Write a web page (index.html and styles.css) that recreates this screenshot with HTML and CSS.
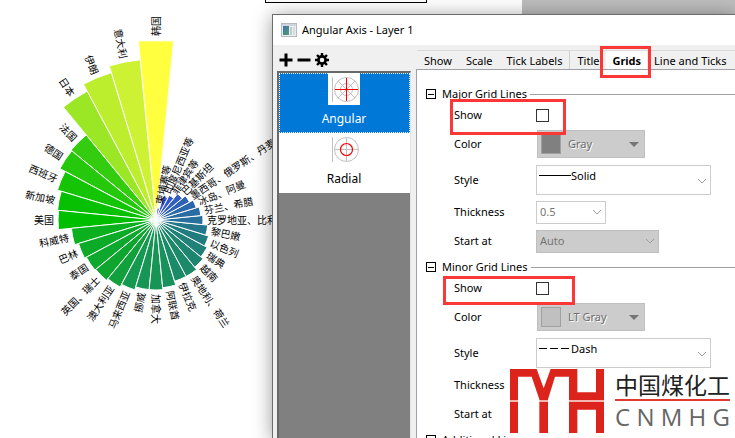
FILE: index.html
```html
<!DOCTYPE html>
<html lang="en">
<head>
<meta charset="utf-8">
<title>Angular Axis - Layer 1</title>
<link rel="stylesheet" href="styles.css">
</head>
<body>
<main class="desktop">
  <div class="page-frame"></div>
  <div class="workspace"></div>
  <svg class="chart" id="chart" width="320" height="438" viewBox="0 0 320 438" role="img" aria-label="Polar chart by country"></svg>

  <section class="dialog" aria-labelledby="dialog-title">
    <header class="titlebar">
      <svg width="16" height="14" viewBox="0 0 16 14" aria-hidden="true">
        <defs><linearGradient id="pane" x1="0" y1="0" x2="1" y2="1"><stop offset="0" stop-color="#3f6fb0"/><stop offset="1" stop-color="#4fa070"/></linearGradient></defs>
        <rect x=".5" y=".5" width="15" height="13" fill="#e9edf0" stroke="#b4babf"/>
        <rect x="1" y="1" width="14" height="2" fill="#cfd5da"/>
        <rect x="2" y="3" width="6" height="9" fill="url(#pane)"/>
        <rect x="9" y="4" width="2" height="8" fill="#c2c9ce"/><rect x="12" y="4" width="2" height="8" fill="#d6dbdf"/>
      </svg>
      <h1 id="dialog-title">Angular Axis - Layer 1</h1>
    </header>
    <div class="content">
      <aside class="side">
        <div class="tools">
          <button type="button" aria-label="Add"><svg width="14" height="14" viewBox="0 0 14 14"><path d="M7 0.5v13M0.5 7h13" stroke="#000" stroke-width="3"/></svg></button>
          <button type="button" aria-label="Remove"><svg width="14" height="14" viewBox="0 0 14 14"><path d="M0.5 7h13" stroke="#000" stroke-width="3"/></svg></button>
          <button type="button" aria-label="Settings"><svg width="14" height="14" viewBox="0 0 14 14"><circle cx="7" cy="7" r="3.6" fill="none" stroke="#000" stroke-width="2.6"/><path d="M7 0v3M7 11v3M0 7h3M11 7h3M2 2l2.2 2.2M9.8 9.8L12 12M2 12l2.2-2.2M9.8 4.2L12 2" stroke="#000" stroke-width="2.4"/></svg></button>
        </div>
        <div class="list">
          <button type="button" class="item selected">
            <svg width="32" height="32" viewBox="0 0 32 32" aria-hidden="true"><rect width="32" height="32" fill="#fff"/><g fill="none" stroke="#c0c0c0"><path d="M4.5 4v25"/><circle cx="18.5" cy="16.5" r="12"/><circle cx="18.5" cy="16.5" r="6"/><path d="M10 8l17 17M10 25L27 8"/></g><path d="M18 5h1v23h-1zM7 16h23v1H7z" fill="#f00"/></svg>
            <span>Angular</span>
          </button>
          <button type="button" class="item">
            <svg width="32" height="32" viewBox="0 0 32 32" aria-hidden="true"><g fill="none" stroke="#c0c0c0"><path d="M4.5 4v25M18.5 5v23M7 16.5h23"/><circle cx="18.5" cy="16.5" r="12"/></g><circle cx="18.5" cy="16.5" r="6" fill="none" stroke="#f00" stroke-width="1.2"/></svg>
            <span>Radial</span>
          </button>
        </div>
      </aside>
      <div class="pane">
        <nav class="tabs">
          <button type="button">Show</button><button type="button">Scale</button><button type="button" class="ruled">Tick Labels</button><button type="button">Title</button><button type="button" class="active">Grids</button><button type="button">Line and Ticks</button>
        </nav>
        <form class="form">
          <div role="group" class="group" aria-labelledby="major">
            <div class="head"><button type="button" class="fold" aria-label="Collapse major grid lines"></button><span id="major">Major Grid Lines</span><i></i></div>
            <div class="row"><label for="major-show">Show</label><input type="checkbox" id="major-show"></div>
            <div class="row tall"><label for="major-color">Color</label><button type="button" id="major-color" class="color" disabled><i class="swatch gray"></i><span>Gray</span><svg width="10" height="5" viewBox="0 0 10 5"><path d="M0 0h10L5 5z" fill="#757575"/></svg></button></div>
            <div class="row tall"><label for="major-style">Style</label><div class="drop line"><select id="major-style"><option>Solid</option></select><svg class="sample" width="32" height="1"><path d="M0 .5h32" stroke="#000"/></svg><svg class="arrow" width="10" height="6" viewBox="0 0 10 6"><path d="M1 1l4 4 4-4"/></svg></div></div>
            <div class="row mid"><label for="major-thickness">Thickness</label><div class="drop small"><select id="major-thickness"><option>0.5</option></select><svg class="arrow" width="10" height="6" viewBox="0 0 10 6"><path d="M1 1l4 4 4-4"/></svg></div></div>
            <div class="row last"><label for="major-start">Start at</label><div class="drop auto"><select id="major-start" disabled><option>Auto</option></select><svg class="arrow" width="10" height="6" viewBox="0 0 10 6"><path d="M1 1l4 4 4-4"/></svg></div></div>
          </div>
          <div role="group" class="group" aria-labelledby="minor">
            <div class="head"><button type="button" class="fold" aria-label="Collapse minor grid lines"></button><span id="minor">Minor Grid Lines</span><i></i></div>
            <div class="row"><label for="minor-show">Show</label><input type="checkbox" id="minor-show"></div>
            <div class="row tall"><label for="minor-color">Color</label><button type="button" id="minor-color" class="color" disabled><i class="swatch"></i><span>LT Gray</span><svg width="10" height="5" viewBox="0 0 10 5"><path d="M0 0h10L5 5z" fill="#757575"/></svg></button></div>
            <div class="row tall"><label for="minor-style">Style</label><div class="drop line"><select id="minor-style"><option>Dash</option></select><svg class="sample" width="32" height="1"><path d="M0 .5h31" stroke="#000" stroke-dasharray="8 3"/></svg><svg class="arrow" width="10" height="6" viewBox="0 0 10 6"><path d="M1 1l4 4 4-4"/></svg></div></div>
            <div class="row mid"><span>Thickness</span></div>
            <div class="row last"><span>Start at</span></div>
          </div>
          <div class="head"><button type="button" class="fold" aria-label="Collapse additional lines"></button><span>Additional Lines</span><i></i></div>
        </form>
      </div>
    </div>
  </section>

  <div class="mark mark-tab"></div>
  <div class="mark mark-major"></div>
  <div class="mark mark-minor"></div>

  <div class="brand">
    <svg width="94" height="64" viewBox="30 27 282 192" aria-hidden="true">
      <path fill="#f5b5b0" d="M30 119h24v8H30zM118 119h26v8h-26zM207 119h105v8H207z"/>
      <path fill="#dc241c" d="M30 27h80l21 58 21-58h80v70h56V27h24v93H207V50h-42l-21 68v2h-26v-2L95 50H54v70H30zM30 126h24v93H30zM118 126h26v93h-26zM207 126h105v93h-24v-70h-56v70h-25z"/>
    </svg>
    <div class="brand-text">
      <div class="brand-cn">中国煤化工</div>
      <div class="brand-en"><span>C</span><span>N</span><span>M</span><span>H</span><span>G</span></div>
    </div>
  </div>
</main>
<script src="chart.js"></script>
</body>
</html>
```
FILE: styles.css
```css
* { box-sizing: border-box; }
body {
  margin: 0;
  background: #fff;
  color: #000;
  font: 11px/16px "Noto Sans", "Noto Sans CJK SC", sans-serif;
}
button, select, input { font: inherit; color: inherit; margin: 0; }
button { padding: 0; border: 0; background: none; }
svg { display: block; flex: none; }

.desktop { position: relative; min-height: 100vh; overflow: hidden; }
.page-frame {
  position: absolute; left: 265px; top: -20px; width: 162px; height: 23px;
  border: 1px solid #000;
}
.workspace { position: absolute; left: 522px; right: 0; top: 0; height: 60px; background: #bdbdbd; }
.chart { position: absolute; left: 0; top: 0; }
.chart text { font-family: "Noto Sans CJK SC", sans-serif; font-size: 10px; }

.dialog {
  position: absolute; left: 272px; right: -1px; top: 14px; bottom: -1px;
  display: flex; flex-direction: column;
  border: 1px solid #6c6c6c;
  background: #f0f0f0;
  box-shadow: 0 2px 18px rgba(0, 0, 0, .4);
}
.titlebar {
  display: flex; align-items: center; gap: 5px;
  height: 30px; padding-left: 8px; flex: none;
  background: #fff;
}
.titlebar h1 { margin: 0; font-size: 11px; font-weight: 400; }
.content { display: flex; flex: 1; min-height: 0; }
.side { display: flex; flex-direction: column; width: 143px; padding-left: 4px; padding-right: 5px; flex: none; }
.tools { display: flex; align-items: center; gap: 4px; height: 26px; padding: 4px 0 0 2px; flex: none; }
.list {
  flex: 1; background: #808080;
  border: 2px solid #696969; border-bottom: 0;
  border-right: 1px solid #e3e3e3;
}
.item {
  display: flex; flex-direction: column; align-items: center; gap: 6px;
  width: 100%; height: 60px; padding: 0 1px 0 0;
  background: #fff; font-size: 12px;
}
.item.selected { background: #0078d7; color: #fff; outline: 1px dotted #fff; outline-offset: -1px; }

.pane { display: flex; flex-direction: column; flex: 1; min-width: 0; }
.tabs { display: flex; height: 24px; margin-top: 5px; border-top: 1px solid #d9d9d9; margin-left: 1px; overflow: hidden; flex: none; }
.tabs button { height: 19px; padding: 0 7px; white-space: nowrap; }
.tabs .ruled { border-right: 1px solid #d0d0d0; }
.tabs .title { padding: 0 6px; }
.tabs .active { background: #fff; font-weight: 700; height: 24px; padding: 0 6px 5px; }
.form {
  display: flex; flex-direction: column; gap: 1px; flex: 1; min-height: 0;
  margin-top: -5px; padding: 14px 0 0 9px;
  background: #fff; border: 1px solid #a0a0a8; border-right: 0; border-bottom: 0;
  overflow: hidden;
}
.group { flex: none; }
.head { display: flex; align-items: center; height: 20px; flex: none; }
.head span { margin: 0 3px 0 6px; white-space: nowrap; }
.head i { flex: 1; height: 1px; background: #a0a0a0; }
.fold { position: relative; width: 10px; height: 10px; border: 1px solid #000; }
.fold::after { content: ""; position: absolute; left: 1px; right: 1px; top: 4px; height: 1px; background: #000; }
.row { display: grid; grid-template-columns: 82px 1fr; align-items: center; justify-items: start; height: 22px; padding-left: 28px; }
.row.tall { height: 36px; }
.row.mid { height: 28px; }
.row.last { height: 30px; }
input[type="checkbox"] { appearance: none; width: 13px; height: 13px; border: 1px solid #333; background: #fff; }
.color {
  display: flex; align-items: center; gap: 7px;
  width: 108px; height: 28px; margin-left: 1px; padding: 0 5px 0 3px;
  background: #ccc; border: 1px solid #bfbfbf;
  color: #6d6d6d; text-shadow: 1px 1px #fff;
}
.color svg { margin-left: auto; }
.swatch { width: 20px; height: 20px; border: 1px solid #a0a0a0; background: #c0c0c0; }
.swatch.gray { background: #808080; }
.drop { position: relative; }
.drop select { appearance: none; width: 100%; height: 100%; padding: 0 20px 0 3px; border: 1px solid #ccc; border-radius: 0; background: #fff; opacity: 1; }
.drop svg { position: absolute; pointer-events: none; }
.arrow { right: 4px; top: calc(50% - 3px); fill: none; stroke: #a0a0a0; }
.line { width: 175px; height: 30px; }
.line .arrow { top: 13px; }
.line select { padding: 0 20px 8px 34px; }
.sample { left: 3px; top: 10px; }
.small { width: 70px; height: 23px; }
.drop.small select { color: #757575; }
.auto { width: 123px; height: 23px; }
.drop.auto select { color: #757575; background: #ccc; border-color: #bfbfbf; }

.mark { position: absolute; border: 3px solid #fd3636; }
.mark-tab { left: 600px; top: 46px; width: 51px; height: 32px; }
.mark-major { left: 450px; top: 99px; width: 116px; height: 36px; }
.mark-minor { left: 443px; top: 276px; width: 132px; height: 29px; }

.brand {
  position: absolute; left: 510px; right: 0; top: 369px; bottom: 0;
  display: flex; gap: 11px; align-items: flex-start;
  background: #fff;
}
.brand-cn { font: 23px/30px "Noto Sans CJK SC", sans-serif; color: #222; border-bottom: 2px solid #e03a34; white-space: nowrap; }
.brand-en { display: flex; justify-content: space-between; padding-top: 4px; font: 24px/24px "Open Sans", sans-serif; color: #666; }
```
FILE: chart.js
```js
// Sectors run anticlockwise from the top: [label, radius, colour].
const sectors = [
  ["韩国", 180, "#ffff40"], ["意大利", 161, "#cdf233"], ["伊朗", 154, "#bdee2e"],
  ["日本", 146, "#9be625"], ["法国", 110, "#34cc0e"], ["德国", 109, "#25c80b"],
  ["西班牙", 103, "#14c405"], ["新加坡", 99, "#08c002"], ["美国", 98, "#00be00"],
  ["科威特", 85, "#0ab01e"], ["巴林", 81, "#0cab27"], ["泰国", 79, "#0da82d"],
  ["英国、瑞士", 78, "#0fa630"], ["澳大利亚", 76, "#12a03c"], ["马来西亚", 73, "#159850"],
  ["挪威", 70, "#179555"], ["加拿大", 70, "#179555"], ["阿联酋", 68, "#18915c"],
  ["伊拉克", 64, "#1b8b67"], ["奥地利、荷兰", 64, "#1c8a69"], ["越南", 61, "#1e866f"],
  ["瑞典", 58, "#1f8178"], ["以色列", 55, "#217c80"], ["黎巴嫩", 52, "#24778b"],
  ["克罗地亚、比利时", 47, "#27709b"], ["芬兰、希腊", 45, "#286ca1"], ["冰岛、阿曼", 42, "#2a67ab"],
  ["墨西哥、俄罗斯、丹麦", 38, "#2d63b5"], ["巴基斯坦", 34, "#3060be"], ["菲律宾等", 28, "#3358cc"],
  ["印度尼西亚等", 25, "#3852da"], ["柬埔寨等", 12, "#4040ff"]
];
const NS = "http://www.w3.org/2000/svg";
const chart = document.getElementById("chart");
const cx = 156, cy = 220, step = 360 / sectors.length;
const point = (deg, r) => {
  const a = deg * Math.PI / 180;
  return (cx + r * Math.cos(a)).toFixed(2) + " " + (cy + r * Math.sin(a)).toFixed(2);
};
function add(name, attrs, text) {
  const node = document.createElementNS(NS, name);
  for (const key in attrs) node.setAttribute(key, attrs[key]);
  if (text) node.textContent = text;
  chart.appendChild(node);
}
sectors.forEach(([label, r, fill], i) => {
  const mid = -90 - i * step;
  const arc = i === 0 ? `L${point(mid + step / 2, r)}` : `A${r} ${r} 0 0 1 ${point(mid + step / 2, r)}`;
  add("path", { d: `M${cx} ${cy}L${point(mid - step / 2, r)}${arc}Z`, fill, stroke: "#fff", "stroke-width": 1 });
});
sectors.forEach(([label, r], i) => {
  const mid = -90 - i * step;
  const left = i > 0 && i < 16;
  const gap = r + 4;
  add("text", {
    x: left ? -gap : gap, y: 4, "text-anchor": left ? "end" : "start",
    transform: `translate(${cx} ${cy}) rotate(${left ? mid + 180 : mid})`
  }, label);
});
```
